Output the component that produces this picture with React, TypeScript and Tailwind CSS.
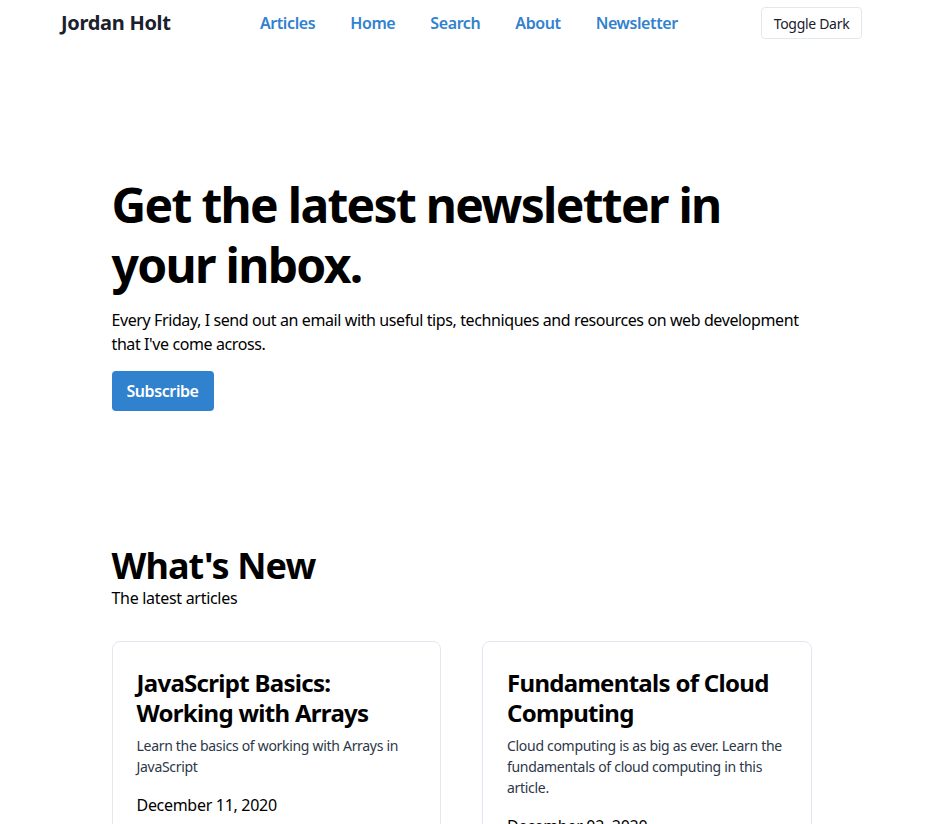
import React from 'react'

const links = ['Articles', 'Home', 'Search', 'About', 'Newsletter']

const articles = [
  {
    title: 'JavaScript Basics: Working with Arrays',
    summary: 'Learn the basics of working with Arrays in JavaScript',
    date: 'December 11, 2020',
  },
  {
    title: 'Fundamentals of Cloud Computing',
    summary: 'Cloud computing is as big as ever. Learn the fundamentals of cloud computing in this article.',
    date: 'December 02, 2020',
  },
]

const App = () => {
  return (
    <div className="min-h-screen bg-white text-black font-['Noto_Sans',sans-serif]">
      <div className="w-[923px]">
        <nav className="mx-auto w-[801px] h-[46px] flex items-center justify-between">
          <span className="text-[20px] font-bold text-[#1a202c] tracking-[-0.3px]">Jordan Holt</span>
          <div className="flex gap-[35px] ml-[6px]">
            {links.map((l) => (
              <a key={l} className="text-[16px] font-semibold text-[#3182ce] tracking-[-0.4px]">
                {l}
              </a>
            ))}
          </div>
          <button className="h-[32px] w-[101px] text-[14px] text-[#1a202c] tracking-[-0.3px] border border-[#e2e8f0] rounded-[4px] bg-white">
            Toggle Dark
          </button>
        </nav>

        <main className="mx-auto w-[700px]">
          <section className="pt-[129px] pb-[135px]">
            <h1 className="text-[48px] leading-[60px] font-bold tracking-[-1.7px]">
              Get the latest newsletter in your inbox.
            </h1>
            <p className="mt-[13px] text-[16px] leading-[24px] tracking-[-0.4px]">
              Every Friday, I send out an email with useful tips, techniques and resources on web development that I've come across.
            </p>
            <button className="mt-[15px] h-[40px] w-[102px] rounded-[4px] bg-[#3182ce] text-white font-semibold text-[16px] tracking-[-0.4px]">
              Subscribe
            </button>
          </section>

          <section>
            <h2 className="mt-[2px] text-[36px] leading-[36px] font-bold tracking-[-0.9px]">What's New</h2>
            <p className="mt-[2px] text-[16px] leading-[24px] tracking-[-0.3px]">The latest articles</p>
            <div className="mt-[31px] grid grid-cols-2 gap-[41px]">
              {articles.map((a) => (
                <div key={a.title} className="border border-[#e2e8f0] rounded-[8px] px-6 pt-[26px] pb-6">
                  <h3 className="text-[24px] leading-[30px] font-bold tracking-[-0.7px]">{a.title}</h3>
                  <p className="mt-[7px] text-[14px] leading-[21px] text-[#2d3748] tracking-[-0.3px]">{a.summary}</p>
                  <p className="mt-[16px] text-[16px] leading-[24px] tracking-[-0.3px]">{a.date}</p>
                </div>
              ))}
            </div>
          </section>
        </main>
      </div>
    </div>
  )
}

export default App
